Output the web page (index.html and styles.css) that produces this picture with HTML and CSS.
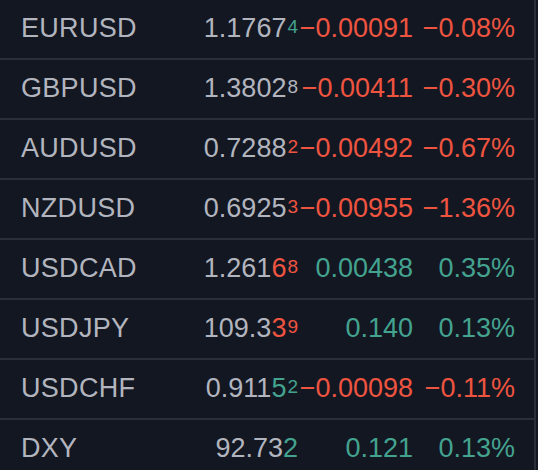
FILE: index.html
```html
<!DOCTYPE html>
<html lang="en">
<head>
<meta charset="utf-8">
<title>Forex quotes</title>
<link rel="stylesheet" href="styles.css">
</head>
<body>
<div class="board">
  <div class="row">
    <span class="sym">EURUSD</span>
    <span class="price">1.1767<span class="pip up">4</span></span>
    <span class="chg down">−0.00091</span>
    <span class="pct down">−0.08%</span>
  </div>
  <div class="row">
    <span class="sym">GBPUSD</span>
    <span class="price">1.3802<span class="pip">8</span></span>
    <span class="chg down">−0.00411</span>
    <span class="pct down">−0.30%</span>
  </div>
  <div class="row">
    <span class="sym">AUDUSD</span>
    <span class="price">0.7288<span class="pip down">2</span></span>
    <span class="chg down">−0.00492</span>
    <span class="pct down">−0.67%</span>
  </div>
  <div class="row">
    <span class="sym">NZDUSD</span>
    <span class="price">0.6925<span class="pip down">3</span></span>
    <span class="chg down">−0.00955</span>
    <span class="pct down">−1.36%</span>
  </div>
  <div class="row">
    <span class="sym">USDCAD</span>
    <span class="price">1.261<span class="down">6</span><span class="pip down">8</span></span>
    <span class="chg up">0.00438</span>
    <span class="pct up">0.35%</span>
  </div>
  <div class="row">
    <span class="sym">USDJPY</span>
    <span class="price">109.3<span class="down">3</span><span class="pip down">9</span></span>
    <span class="chg up">0.140</span>
    <span class="pct up">0.13%</span>
  </div>
  <div class="row">
    <span class="sym">USDCHF</span>
    <span class="price">0.911<span class="up">5</span><span class="pip up">2</span></span>
    <span class="chg down">−0.00098</span>
    <span class="pct down">−0.11%</span>
  </div>
  <div class="row">
    <span class="sym">DXY</span>
    <span class="price">92.73<span class="up">2</span></span>
    <span class="chg up">0.121</span>
    <span class="pct up">0.13%</span>
  </div>
</div>
</body>
</html>
```
FILE: styles.css
```css
html, body {
  margin: 0;
  padding: 0;
  background: #131722;
  overflow: hidden;
}
body {
  font-family: "Liberation Sans", Arial, sans-serif;
  color: #b2b5be;
  font-size: 27px;
}
.board {
  width: 534px;
  border-right: 2px solid #2a2e39;
  min-height: 470px;
}
.row {
  display: grid;
  grid-template-columns: 150px 127px 115px 102px;
  padding: 0 19px 2px 21px;
  height: 56px;
  line-height: 56px;
  border-bottom: 2px solid #2a2e39;
  white-space: nowrap;
}
.sym {
  letter-spacing: 0.3px;
}
.price, .chg, .pct {
  text-align: right;
}
.pip {
  font-size: 19px;
  vertical-align: 4px;
  margin-left: 1px;
  line-height: 1;
}
.up { color: #43a38f; }
.down { color: #ee5440; }
```
